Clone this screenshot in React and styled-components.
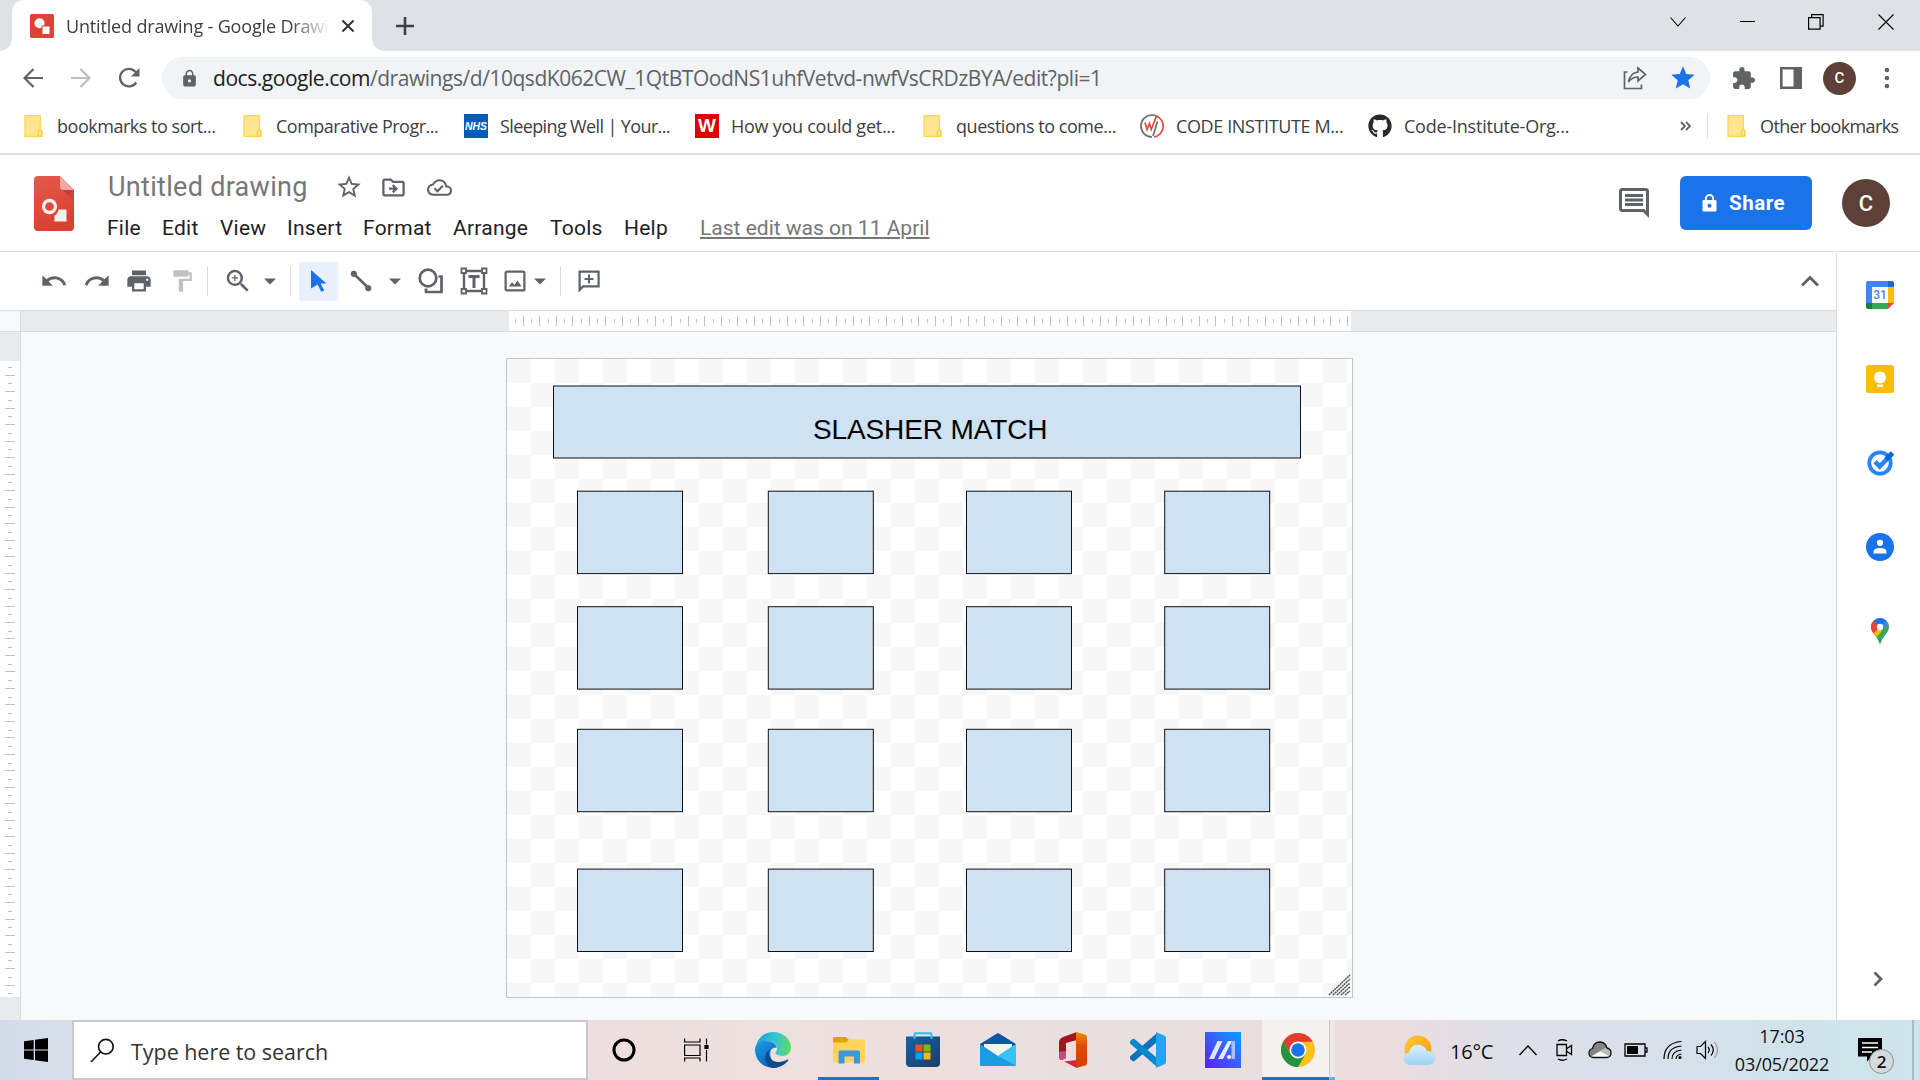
import React from "react";
import styled, { createGlobalStyle } from "styled-components";
import {
  MdUndo, MdRedo, MdPrint, MdFormatPaint, MdZoomIn, MdOutlineComment,
  MdStarOutline, MdStar, MdOutlineDriveFileMove, MdOutlineCloudDone, MdLock, MdExtension,
} from "react-icons/md";
import { FaGithub } from "react-icons/fa";

const Global = createGlobalStyle`
  * { box-sizing: border-box; }
  html, body { margin: 0; padding: 0; overflow: hidden; }
  svg { display: block; flex: none; }
`;

const ui = `"Open Sans", "Noto Sans", sans-serif`;

const Screen = styled.div`
  width: 1920px;
  height: 1080px;
  display: flex;
  flex-direction: column;
  background: #fff;
  overflow: hidden;
  font-family: ${ui};
`;

/* ---------- shared parts ---------- */
const Cell = styled.span`
  display: flex;
  flex: none;
  align-items: center;
  justify-content: center;
  width: ${(p) => p.$w}px;
  height: ${(p) => (p.$h ? p.$h + "px" : "auto")};
  margin-left: ${(p) => p.$ml || 0}px;
  color: ${(p) => p.$color || "#5f6368"};
  background: ${(p) => p.$bg || "transparent"};
  border-radius: ${(p) => p.$r || 0}px;
`;
const Spacer = styled.span`flex: 1;`;
const Avatar = styled.span`
  display: flex;
  flex: none;
  align-items: center;
  justify-content: center;
  width: ${(p) => p.$s}px;
  height: ${(p) => p.$s}px;
  margin: ${(p) => p.$m || "0"};
  border-radius: 50%;
  background: #5d4037;
  color: #fff;
  font: 500 ${(p) => p.$f}px Roboto, sans-serif;
`;

/* ---------- tab strip ---------- */
const TabStrip = styled.header`
  display: flex;
  flex: none;
  height: 51px;
  background: #dee1e6;
`;
const TabFoot = styled.span`
  width: 12px;
  height: 12px;
  align-self: flex-end;
  background: radial-gradient(circle at ${(p) => (p.$right ? "100%" : "0")} 0, #dee1e6 11.5px, #fff 12px);
`;
const Tab = styled.div`
  display: flex;
  align-items: center;
  width: 360px;
  padding: 0 0 0 18px;
  border-radius: 12px 12px 0 0;
  background: #fff;
`;
const TabTitle = styled.span`
  width: 262px;
  margin-left: 12px;
  overflow: hidden;
  white-space: nowrap;
  font-size: 18px;
  letter-spacing: -0.16px;
  color: #3c4043;
  mask-image: linear-gradient(90deg, #000 225px, transparent 264px);
`;
const WindowButtons = styled.div`
  display: flex;
  height: 43px;
`;

/* ---------- address bar ---------- */
const NavBar = styled.div`
  display: flex;
  flex: none;
  align-items: center;
  height: 54px;
  padding-left: 12px;
`;
const Omnibox = styled.div`
  display: flex;
  align-items: center;
  width: 1548px;
  height: 42px;
  margin-left: 12px;
  padding-left: 14px;
  border-radius: 21px;
  background: #f1f3f4;
`;
const Url = styled.span`
  width: 1360px;
  margin-left: 11px;
  white-space: nowrap;
  font-size: 21px;
  letter-spacing: -0.46px;
  color: #5f6368;
  b { font-weight: 400; color: #202124; }
`;

/* ---------- bookmarks ---------- */
const Bookmarks = styled.nav`
  display: flex;
  flex: none;
  align-items: center;
  height: 50px;
  padding: 0 0 7px 24px;
  border-bottom: 2px solid #dadcde;
`;
const Bookmark = styled.span`
  display: flex;
  flex: none;
  align-items: center;
  gap: 12px;
  width: ${(p) => p.$w}px;
  white-space: nowrap;
  font-size: 18px;
  letter-spacing: ${(p) => p.$ls}px;
  color: #3c4043;
`;
const Favicon = styled.span`
  display: flex;
  flex: none;
  align-items: center;
  justify-content: ${(p) => (p.$folder ? "flex-start" : "center")};
  width: ${(p) => (p.$folder ? 21 : 24)}px;
  height: 24px;
  background: ${(p) => p.$bg || "transparent"};
  color: #fff;
  font: ${(p) => p.$font || "inherit"};
  letter-spacing: 0;
`;
const Rule = styled.span`
  flex: none;
  width: 1px;
  height: ${(p) => p.$h}px;
  margin: ${(p) => p.$m};
  background: #dadce0;
`;

/* ---------- document header ---------- */
const DocHeader = styled.div`
  display: flex;
  flex: none;
  height: 97px;
  padding-left: 34px;
  border-bottom: 1px solid #dadce0;
`;
const LogoBox = styled.div`padding-top: 21px;`;
const DocInfo = styled.div`
  margin-left: 33px;
  padding-top: 14px;
`;
const TitleRow = styled.div`
  display: flex;
  align-items: center;
  height: 36px;
`;
const DocTitle = styled.span`
  width: 228px;
  padding-left: 1px;
  white-space: nowrap;
  font: 400 27px Roboto, sans-serif;
  letter-spacing: 0.3px;
  color: #777;
`;
const MenuRow = styled.div`
  display: flex;
  height: 44px;
  padding-top: 9px;
  font: 400 21px/28px Roboto, sans-serif;
  letter-spacing: 0.25px;
  color: #202124;
`;
const MenuItem = styled.span`
  width: ${(p) => p.$w}px;
  white-space: nowrap;
`;
const LastEdit = styled.a`
  color: #777;
  white-space: nowrap;
  letter-spacing: 0;
  text-decoration: underline;
  text-decoration-thickness: 2px;
  text-underline-offset: 2px;
`;
const HeaderActions = styled.div`
  display: flex;
  align-items: center;
  height: 96px;
`;
const ShareButton = styled.button`
  display: flex;
  align-items: center;
  gap: 12px;
  width: 132px;
  height: 54px;
  margin: 0 30px 0 28px;
  padding: 0 0 0 22px;
  border: 0;
  border-radius: 6px;
  background: #1a73e8;
  color: #fff;
  font: 700 20.5px Roboto, sans-serif;
  letter-spacing: 0.55px;
`;

/* ---------- editor ---------- */
const Body = styled.div`
  display: flex;
  flex: none;
  height: 768px;
`;
const Editor = styled.main`
  display: flex;
  flex-direction: column;
  width: 1836px;
`;
const Toolbar = styled.div`
  display: flex;
  flex: none;
  align-items: center;
  height: 59px;
  padding-left: 33px;
  border-bottom: 1px solid #dadce0;
`;
const RulerRow = styled.div`
  display: flex;
  height: 21px;
  border-bottom: 1px solid #d9dbde;
  background: #e8eaed;
`;
const Corner = styled.span`
  width: 21px;
  margin-right: 488px;
  background: #f8f9fb;
  border-right: 1px solid #d9dbde;
`;
const RulerX = styled.div`
  width: 842px;
  background: #fff;
`;
const Work = styled.div`
  display: flex;
  flex: 1;
  background: #f8f9fb;
`;
const RulerY = styled.div`
  width: 21px;
  padding-top: 29px;
  background: #e8eaed;
  border-right: 1px solid #d9dbde;
`;
const RulerYScale = styled.div`
  height: 636px;
  background: #fff;
`;
const Canvas = styled.div`
  width: 847px;
  height: 640px;
  margin: 26px 0 0 485px;
  border: 1px solid #c4c4c4;
  background: conic-gradient(#fff 25%, #f7f7f7 0 50%, #fff 0 75%, #f7f7f7 0) 0 0 / 48px 48px;
`;
const SidePanel = styled.aside`
  display: flex;
  flex-direction: column;
  align-items: center;
  gap: 42px;
  width: 84px;
  margin-top: 1px;
  padding: 21px 0 0 3px;
  border-left: 1px solid #dadce0;
`;
const SideApp = styled.span`
  display: flex;
  align-items: center;
  justify-content: center;
  width: 42px;
  height: 42px;
  margin-top: ${(p) => p.$mt || 0}px;
  margin-left: ${(p) => p.$ml || 0}px;
`;

/* ---------- taskbar ---------- */
const Taskbar = styled.footer`
  display: flex;
  flex: none;
  height: 60px;
  background: linear-gradient(90deg, #d2dbe8 0, #d6dfe9 72px, #ecdfdf 588px, #eee0de 760px, #e9dfe0 1150px, #eadddf 1400px, #dfdfe8 1500px, #d8e0ea 1640px, #d0e2ea 1780px, #cde4ea 1920px);
`;
const SearchBox = styled.div`
  display: flex;
  align-items: center;
  width: 516px;
  margin-left: 12px;
  padding-left: 16px;
  border: 2px solid #c9c9c9;
  background: #fff;
`;
const SearchText = styled.span`
  margin: 2px 0 0 16px;
  font-size: 21.5px;
  letter-spacing: -0.04px;
  color: #333;
`;
const TaskApp = styled.span`
  display: flex;
  flex: none;
  align-items: center;
  justify-content: center;
  width: ${(p) => p.$w || 75}px;
  padding-left: ${(p) => (p.$active ? 4 : 0)}px;
  border-bottom: 3px solid ${(p) => (p.$open ? "#0078d7" : "transparent")};
  border-top: 3px solid transparent;
  margin-left: ${(p) => p.$ml || 0}px;
  background: ${(p) => (p.$active ? "#f6f1f1" : "transparent")};
`;
const StackEdge = styled.span`
  width: 6px;
  border-left: 1px solid #d2c9cb;
  border-bottom: 3px solid #60ade6;
  background: #efe7e8;
`;
const Temp = styled.span`
  width: 60px;
  margin: 2px 0 0 14px;
  align-self: center;
  white-space: nowrap;
  font-size: 20px;
  letter-spacing: -0.2px;
  color: #111;
`;
const Clock = styled.div`
  display: flex;
  flex-direction: column;
  align-items: center;
  width: 110px;
  margin-left: 3px;
  padding-top: 2px;
  font-size: 18px;
  line-height: 28px;
  letter-spacing: -0.12px;
  color: #111;
`;
const Notice = styled.span`
  display: grid;
  align-self: center;
  width: 40px;
  height: 44px;
  margin-left: 21px;
  padding-top: 10px;
`;
const Glyph = styled.span`grid-area: 1 / 1;`;
const Badge = styled.span`
  grid-area: 1 / 1;
  align-self: end;
  display: flex;
  align-items: center;
  justify-content: center;
  width: 25px;
  height: 25px;
  margin: 0 0 -2px 11px;
  border: 1px solid #8c9396;
  border-radius: 50%;
  background: #d5dadc;
  font-size: 17px;
  font-weight: 600;
  color: #111;
`;
const ShowDesktop = styled.span`
  width: 8px;
  border-left: 2px solid #a9b9be;
`;

/* ---------- icons ---------- */
const Stroke = ({ w = 24, h = 24, d, c = "#5f6368", sw = 2, ...rest }) => (
  <svg width={w} height={h} viewBox={`0 0 ${w} ${h}`} fill="none" stroke={c} strokeWidth={sw} {...rest}>
    <path d={d} />
  </svg>
);
const Caret = () => (
  <svg width="12" height="7" viewBox="0 0 12 7"><path d="M0 .5h12L6 6.5z" fill="#5f6368" /></svg>
);
const FolderIcon = () => (
  <svg width="19" height="22" viewBox="0 0 19 22">
    <path d="M1 .7h15.300v13.500l1.500 1.300v5.800H1z" fill="#ffe58f" stroke="#fbd751" strokeWidth="1.300" />
    <path d="M14.300 21v-4.500q0-1.600 1.700-1.600t1.800 1.600V21z" fill="#ffe58f" stroke="#f5cf42" strokeWidth="1.200" />
  </svg>
);
const DrawingsFavicon = () => (
  <svg width="24" height="24" viewBox="0 0 24 24">
    <rect width="24" height="24" rx="1.500" fill="#db4437" />
    <circle cx="9.500" cy="9.300" r="5" fill="#fff" />
    <path d="M11.500 11.500h8.500v8.500h-8.500z" fill="#db4437" />
    <path d="M12.500 12.500h7v7.500h-7z" fill="#fff" />
  </svg>
);
const DrawingsLogo = () => (
  <svg width="40" height="55" viewBox="0 0 40 55">
    <defs>
      <linearGradient id="logoBody" x1="0" y1="0" x2="0.300" y2="1">
        <stop offset="0" stopColor="#e35a4e" /><stop offset="1" stopColor="#d9402f" />
      </linearGradient>
      <linearGradient id="logoShade" x1="0" y1="0" x2="1" y2="1">
        <stop offset="0" stopColor="#b83a35" /><stop offset="1" stopColor="#d8443a" />
      </linearGradient>
    </defs>
    <path d="M4 0h22l14 14v37q0 4-4 4H4q-4 0-4-4V4q0-4 4-4z" fill="url(#logoBody)" />
    <path d="M27.500 13L40 25.500V14z" fill="url(#logoShade)" />
    <path d="M26 0l14 14H29.500Q26 14 26 10.500z" fill="#efa9a2" />
    <circle cx="15.500" cy="30.500" r="6" fill="none" stroke="#f1f1f1" strokeWidth="3.300" />
    <path d="M24.500 33.500H32.500V45.500H20.500V39.500Q24 37.500 24.500 33.500z" fill="#f1f1f1" />
  </svg>
);
const CodeInstituteIcon = () => (
  <svg width="24" height="24" viewBox="0 0 24 24" fill="none" strokeWidth="1.700">
    <path d="M12 1A11 11 0 0 0 12 23" stroke="#6b6f73" />
    <path d="M12 1q2.500 0 4.500 1" stroke="#6b6f73" />
    <path d="M16.500 2A11 11 0 0 1 14 23" stroke="#e2483d" />
    <path d="M5 8.500l2 7 2.500-6 1.800 6L16.500 2" stroke="#e2483d" />
    <path d="M17.500 7.500L13 22" stroke="#6b6f73" />
  </svg>
);
const SelectIcon = () => (
  <svg width="16" height="22" viewBox="0 0 16 22"><path d="M0 0l15.500 13.500H9.600l3.600 7-3 1.300-3.500-7.200L0 18.500z" fill="#1a73e8" /></svg>
);
const LineIcon = () => (
  <svg width="22" height="22" viewBox="0 0 22 22" stroke="#5f6368" fill="#5f6368">
    <path d="M4 4l14.500 14" strokeWidth="2.600" /><circle cx="3.800" cy="3.800" r="2.700" /><circle cx="18.300" cy="18.200" r="2.700" />
  </svg>
);
const ShapeIcon = () => (
  <svg width="26" height="26" viewBox="0 0 26 26" stroke="#5f6368" fill="none" strokeWidth="2.700">
    <circle cx="10" cy="10" r="8.300" /><path d="M20.500 8.500h3V24H8v-3.500" />
  </svg>
);
const TextBoxIcon = () => (
  <svg width="28" height="28" viewBox="0 0 28 28" stroke="#5f6368" fill="none">
    <path d="M4 6v16M24 6v16M6 4h16M6 24h16" strokeWidth="2.400" />
    <path d="M8.500 9.500h11M14 9.500v11.500" strokeWidth="3" />
    <g strokeWidth="1.800" fill="#fff">
      <path d="M1.500 1.500h4.500v4.500H1.500zM22 1.500h4.500v4.500H22zM1.500 22h4.500v4.500H1.500zM22 22h4.500v4.500H22z" />
    </g>
  </svg>
);
const ImageIcon = () => (
  <svg width="22" height="22" viewBox="0 0 22 22">
    <rect x="1.600" y="1.600" width="18.800" height="18.800" rx="1.500" fill="none" stroke="#5f6368" strokeWidth="2.200" />
    <path d="M5 16.500l3-4.500 2.300 3 3.200-4.500 4 6z" fill="#5f6368" />
  </svg>
);
const AddCommentIcon = () => (
  <svg width="22" height="22" viewBox="0 0 22 22" fill="none" stroke="#5f6368" strokeWidth="2.200">
    <path d="M1.600 20V1.600h19v14.800H5L1.600 20z" /><path d="M11 4.500v9M6.500 9h9" strokeWidth="2" />
  </svg>
);
const PanelIcon = () => (
  <svg width="22" height="22" viewBox="0 0 22 22">
    <path d="M1.300 1.300h19.400v19.400H1.300z" fill="#fff" stroke="#5f6368" strokeWidth="2.600" /><path d="M13.500 1h7.500v20h-7.500z" fill="#5f6368" />
  </svg>
);
const CalendarIcon = () => (
  <svg width="28" height="28" viewBox="0 0 28 28">
    <path d="M0 2q0-2 2-2h20v6H6v16H0z" fill="#4285f4" /><path d="M22 0h4q2 0 2 2v4h-6z" fill="#1967d2" />
    <path d="M22 6h6v16h-6z" fill="#fbbc04" /><path d="M6 22h16v6H6z" fill="#34a853" />
    <path d="M0 22h6v6H2q-2 0-2-2z" fill="#188038" /><path d="M22 22h6l-6 6z" fill="#ea4335" /><path d="M6 6h16v16H6z" fill="#fff" />
    <text x="14" y="18.300" textAnchor="middle" fontFamily="Roboto, sans-serif" fontSize="12" fontWeight="500" fill="#4285f4">31</text>
  </svg>
);
const KeepIcon = () => (
  <svg width="28" height="28" viewBox="0 0 28 28">
    <rect width="28" height="28" rx="2.500" fill="#fbbc04" />
    <circle cx="14" cy="12.500" r="6" fill="#fff" /><path d="M11 15h6v3h-6zM11 19.500h6v2.500h-6z" fill="#fff" />
  </svg>
);
const TasksIcon = () => (
  <svg width="28" height="28" viewBox="0 0 28 28" fill="none">
    <circle cx="14" cy="14" r="10.700" stroke="#2684fc" strokeWidth="3.800" />
    <path d="M9 12.700l4.700 4.700L22.500 8.500" stroke="#2684fc" strokeWidth="4.600" /><path d="M20 10.500L26.500 4" stroke="#0066da" strokeWidth="4.800" />
  </svg>
);
const ContactsIcon = () => (
  <svg width="28" height="28" viewBox="0 0 28 28">
    <circle cx="14" cy="14" r="14" fill="#1a73e8" /><circle cx="14" cy="9.800" r="3.100" fill="#fff" />
    <path d="M7.500 20.500v-1.500q0-4 6.500-4t6.500 4v1.500z" fill="#fff" />
  </svg>
);
const MapsIcon = () => (
  <svg width="18" height="26" viewBox="0 0 18 26">
    <defs><clipPath id="pin"><path d="M9 0a9 9 0 0 1 9 9c0 6-6 8-8 15.500q-1 2.500-2 0C6 17 0 15 0 9a9 9 0 0 1 9-9z" /></clipPath></defs>
    <g clipPath="url(#pin)">
      <path d="M0 0h18v26H0z" fill="#34a853" /><path d="M0 0h18L9 9z" fill="#1a73e8" /><path d="M9 9L18 0v5L4 20 0 16z" fill="#4285f4" />
      <path d="M0 15L6 8l5 5-7 8z" fill="#fbbc04" /><path d="M0 3l2.500 0L9 9l-6 6-3 0z" fill="#ea4335" />
    </g>
    <circle cx="9" cy="9" r="3.200" fill="#fff" />
  </svg>
);
const WindowsIcon = () => (
  <svg width="24" height="24" viewBox="0 0 24 24"><path d="M0 3.300L9.700 2v9.500H0zM11 1.800L24 0v11.500H11zM0 12.500h9.700V22L0 20.700zM11 12.500h13V24L11 22.200z" /></svg>
);
const EdgeIcon = () => (
  <svg width="36" height="36" viewBox="0 0 36 36">
    <defs>
      <linearGradient id="edgeTop" x1="0" y1="0.500" x2="1" y2="0.600"><stop offset="0" stopColor="#1fa2dc" /><stop offset="0.550" stopColor="#37c6d0" /><stop offset="1" stopColor="#5fdc5a" /></linearGradient>
      <linearGradient id="edgeSide" x1="0" y1="0" x2="0.600" y2="1"><stop offset="0" stopColor="#1b9de2" /><stop offset="1" stopColor="#0b62c4" /></linearGradient>
    </defs>
    <path d="M1 14C3 5 10 0 18 0c10 0 18 7 18 15.500 0 5-4 8.500-8.500 8.500-5 0-7-2-7-3.200 0-1 1.500-1.500 1.500-4C22 12 17 9 12 9 7 9 3 11 1 14z" fill="url(#edgeTop)" />
    <path d="M0 18C0 12 5 9 11 9c6 0 10.500 3 10.500 7-7-2-10 9 1 19.300A18 18 0 0 1 0 18z" fill="url(#edgeSide)" />
    <path d="M15.500 17.500C13 20 13 25 17 28c5 3.500 11 2 15.500-.5.800-.3 1 .3.600 1C29 34 23 36 18 36c-7-2-9-9-7-14 1-2.500 3-4 4.500-4.500z" fill="#114a8b" />
  </svg>
);
const ExplorerIcon = () => (
  <svg width="34" height="28" viewBox="0 0 34 28">
    <path d="M1 1.500Q1 1 2 1h12l3 3v6H1z" fill="#e0a10c" /><path d="M1 6.500h13l3-3h15q1 0 1 1v21q0 1-1 1H2q-1 0-1-1z" fill="#ffd35c" />
    <path d="M6.500 27.500V16q0-1.500 1.500-1.500h18.500q1.500 0 1.500 1.500v11.500h-6v-7h-9.500v7z" fill="#3b97de" />
  </svg>
);
const StoreIcon = () => (
  <svg width="36" height="36" viewBox="0 0 36 36">
    <defs><linearGradient id="store" x1="0" y1="0" x2="1" y2="1"><stop offset="0" stopColor="#0f65ad" /><stop offset="1" stopColor="#233a63" /></linearGradient></defs>
    <path d="M1 4.500h34V31q0 4-4 4H5q-4 0-4-4z" fill="url(#store)" /><path d="M9.500 7V2.500q0-1.200 1.200-1.200h14.600q1.200 0 1.200 1.200V7" fill="none" stroke="#27c0f2" strokeWidth="2" />
    <path d="M10.500 12.500h7v7h-7z" fill="#f25022" /><path d="M18.500 12.500h7v7h-7z" fill="#7fba00" /><path d="M10.500 20.500h7v7h-7z" fill="#00a4ef" /><path d="M18.500 20.500h7v7h-7z" fill="#ffb900" />
  </svg>
);
const MailIcon = () => (
  <svg width="36" height="34" viewBox="0 0 36 34">
    <path d="M0 11L17 .600q1-.600 2 0L36 11v6H0z" fill="#0a57a5" /><path d="M4 11h28v12H4z" fill="#f2f2f2" />
    <path d="M0 11l18 12L36 11v21q0 1-1 1H1q-1 0-1-1z" fill="#1b9de2" /><path d="M36 11v21.500L18 23z" fill="#37c3f1" />
  </svg>
);
const OfficeIcon = () => (
  <svg width="28" height="36" viewBox="0 0 28 36">
    <defs><linearGradient id="office" x1="0" y1="0" x2="0" y2="1"><stop offset="0" stopColor="#f08a00" /><stop offset="0.400" stopColor="#e2490b" /><stop offset="1" stopColor="#d53a00" /></linearGradient></defs>
    <path d="M18 0L4 5Q0 7 0 10v15q0 3 3 3l4-2V11l11-3z" fill="#a3161f" /><path d="M0 20v5q0 3 3 3l4-2v-7z" fill="#c54a83" />
    <path d="M5 29.500l13-1.500v8z" fill="#d9203d" /><path d="M17 0l9 2.500q2 .500 2 3v25q0 2.500-2 3L17 36z" fill="url(#office)" />
  </svg>
);
const CodeIcon = () => (
  <svg width="36" height="36" viewBox="0 0 36 36">
    <path d="M27 1L0 24.500q-1 1.200 0 2.200l2.500 2.200q1 .6 2 0L27 10z" fill="#0a72b9" /><path d="M27 35L0 11.500q-1-1.200 0-2.200l2.500-2.200q1-.6 2 0L27 26z" fill="#0d86d0" />
    <path d="M26 0l9 4q1 .6 1 2v24q0 1.400-1 2l-9 4z" fill="#27a4ef" />
  </svg>
);
const AsusIcon = () => (
  <svg width="36" height="36" viewBox="0 0 36 36">
    <defs><linearGradient id="asus" x1="0" y1="1" x2="1" y2="0"><stop offset="0" stopColor="#5a1fff" /><stop offset="0.500" stopColor="#3a5dfd" /><stop offset="1" stopColor="#05a2ff" /></linearGradient></defs>
    <path d="M0 0h36v36H0z" fill="url(#asus)" /><path d="M12.500 9h5L9 27H4z" fill="#dfe4ff" /><path d="M23 9h4L18 27h-5z" fill="#e9ecff" />
    <path d="M26.500 9h3.500v18h-3.500z" fill="#aac0ff" /><circle cx="24" cy="25" r="2" fill="#fff" />
  </svg>
);
const ChromeIcon = () => (
  <svg width="34" height="34" viewBox="0 0 34 34">
    <circle cx="17" cy="17" r="17" fill="#fbc116" /><path d="M2.280 8.500A17 17 0 0 1 31.720 8.500L17 9l-7.360 12.250z" fill="#e33b2e" />
    <path d="M2.280 8.500A17 17 0 0 0 17 34l7.360-12.750L17 25.500l-7.360-4.250z" fill="#229342" />
    <circle cx="17" cy="17" r="8.500" fill="#fff" /><circle cx="17" cy="17" r="6.800" fill="#1a73e8" />
  </svg>
);
const WeatherIcon = () => (
  <svg width="33" height="36" viewBox="0 0 33 36">
    <defs>
      <linearGradient id="sun" x1="0" y1="0" x2="1" y2="1"><stop offset="0" stopColor="#ffc83d" /><stop offset="1" stopColor="#ff9a0a" /></linearGradient>
      <linearGradient id="cloud" x1="0" y1="0" x2="0" y2="1"><stop offset="0" stopColor="#dcf2ff" /><stop offset="1" stopColor="#9fd2f5" /></linearGradient>
    </defs>
    <circle cx="15" cy="17" r="13.500" fill="url(#sun)" />
    <path d="M6.500 33a6.300 6.300 0 0 1-.5-12.500Q7.500 13 15 12.800 21.500 13 24 19q8-.5 8.500 6.500-.5 7-7 7.500z" fill="url(#cloud)" />
  </svg>
);
const TrayCloud = () => (
  <svg width="24" height="18" viewBox="0 0 24 18">
    <path d="M5 16.500q-4-.5-4-4.500 0-3.500 3.500-4.500Q6 1 12 1q5.500.3 7 6 4 1 4 5 0 4-4 4.500z" fill="#fafafa" />
    <path d="M4.500 7.500Q6 1.500 12 1.500q5 .3 6.500 5L3 15.500q-1.500-1-1.500-3.500 0-3.500 3-4.500z" fill="#858585" />
    <path d="M12.500 10.500l6-4q4 1 4 5.500 0 2-1.500 3.200z" fill="#bbb" />
    <path d="M5 16.500q-4-.5-4-4.500 0-3.500 3.500-4.500Q6 1 12 1q5.500.3 7 6 4 1 4 5 0 4-4 4.500z" fill="none" stroke="#111" strokeWidth="1.300" />
  </svg>
);

/* ---------- data ---------- */
const bookmarks = [
  { w: 219, kind: "folder", label: "bookmarks to sort...", ls: -0.48 },
  { w: 221, kind: "folder", label: "Comparative Progr...", ls: -0.5 },
  { w: 231, kind: "nhs", label: "Sleeping Well | Your...", ls: -0.62 },
  { w: 228, kind: "w", label: "How you could get...", ls: -0.26 },
  { w: 217, kind: "folder", label: "questions to come...", ls: -0.46 },
  { w: 228, kind: "ci", label: "CODE INSTITUTE M...", ls: -0.38 },
  { w: 309, kind: "github", label: "Code-Institute-Org...", ls: -0.22 },
];
const menus = [["File", 55], ["Edit", 58], ["View", 67], ["Insert", 76], ["Format", 90], ["Arrange", 97], ["Tools", 74], ["Help", 76]];
const columns = [577.5, 768.3, 966.5, 1164.7];
const rows = [491.2, 606.7, 729.3, 869.1];

const BookmarkIcon = ({ kind }) => {
  if (kind === "folder") return <Favicon $folder><FolderIcon /></Favicon>;
  if (kind === "nhs") return <Favicon $bg="#005eb8" $font={'italic 700 10.5px "Liberation Sans", sans-serif'}>NHS</Favicon>;
  if (kind === "w") return <Favicon $bg="#e00000" $font={'700 19px "Liberation Sans", sans-serif'}>W</Favicon>;
  if (kind === "ci") return <Favicon><CodeInstituteIcon /></Favicon>;
  return <Favicon><FaGithub size={24} color="#24292e" /></Favicon>;
};

const ticks = (n, start, from, to) =>
  Array.from({ length: n }, (_, i) => Math.floor(start + 16.48 * i)).filter((v) => v >= from && v < to);

const HorizontalScale = () => (
  <svg width="842" height="20" viewBox="509 311 842 20" fill="#c0c1c9">
    {ticks(52, 523.45, 509, 1351).map((x) => <rect key={x} x={x} y="316" width="1" height="10" />)}
    {ticks(52, 515.5, 509, 1351).map((x) => <rect key={x} x={x} y="319" width="1" height="4" />)}
  </svg>
);
const VerticalScale = () => (
  <svg width="20" height="636" viewBox="0 361 20 636" fill="#bdbec6">
    {ticks(52, 375.3, 361, 996).map((y) => <rect key={y} x="5" y={y} width="10" height="1" />)}
    {ticks(52, 367.5, 361, 996).map((y) => <rect key={y} x="8" y={y} width="4" height="1" />)}
  </svg>
);
const Drawing = () => (
  <svg width="845" height="638" viewBox="507 359 845 638">
    <g fill="#cfe2f3" stroke="#111">
      <rect x="553.5" y="386" width="747" height="72" />
      {rows.map((y) => columns.map((x) => <rect key={`${x}-${y}`} x={x} y={y} width="105" height="82.4" />))}
    </g>
    <text x="813" y="439" fontFamily='"Liberation Sans", Arial, sans-serif' fontSize="28" textLength="234.500">SLASHER MATCH</text>
    <path d="M1329 995l21-20M1333 995l17-16M1337 995l13-12M1341 995l9-8M1345 995l5-4" stroke="#555" strokeWidth="1.500" strokeDasharray="2 .5" />
  </svg>
);

export default function App() {
  return (
    <Screen>
      <Global />
      <TabStrip>
        <TabFoot />
        <Tab>
          <DrawingsFavicon />
          <TabTitle>Untitled drawing - Google Drawings</TabTitle>
          <Cell $w={24} $ml={8}><Stroke w={14} h={14} c="#303235" sw={2} d="M1.500 1.500l11 11M12.500 1.500l-11 11" /></Cell>
        </Tab>
        <TabFoot $right />
        <Cell $w={42}><Stroke w={18} h={18} c="#3c4043" sw={2.6} d="M9 0v18M0 9h18" /></Cell>
        <Spacer />
        <WindowButtons>
          <Cell $w={60}><Stroke w={16} h={10} c="#000" sw={1.1} d="M.500 .500l7.500 8.500 7.500-8.500" /></Cell>
          <Cell $w={78}><Stroke w={15} h={2} c="#000" sw={1} d="M0 .500h15" /></Cell>
          <Cell $w={60}><Stroke w={16} h={16} c="#000" sw={1.200} d="M.600 3.600h11.500v11.500H.600zM3.600 3.600V.600h11.500v11.500h-3" /></Cell>
          <Cell $w={69} $ml={5}><Stroke w={16} h={16} c="#000" sw={1.1} d="M.500 .500l15 15M15.500 .500l-15 15" /></Cell>
        </WindowButtons>
      </TabStrip>

      <NavBar>
        <Cell $w={42}><Stroke w={20} h={20} sw={2.2} d="M20 10H1.500M10.500 1L1.500 10l9 9" /></Cell>
        <Cell $w={54}><Stroke w={20} h={20} c="#bcbec1" sw={2.2} d="M0 10h18.500M9.500 1l9 9-9 9" /></Cell>
        <Cell $w={42}>
          <svg width="22" height="22" viewBox="0 0 22 22"><path d="M18.200 15.500A8.800 8.800 0 1 1 17.500 4.800L20 7.500" fill="none" stroke="#5f6368" strokeWidth="2.300" /><path d="M21.500 1v8.500H13z" fill="#5f6368" /></svg>
        </Cell>
        <Omnibox>
          <Cell $w={26}><MdLock size={19} /></Cell>
          <Url><b>docs.google.com</b>/drawings/d/10qsdK062CW_1QtBTOodNS1uhfVetvd-nwfVsCRDzBYA/edit?pli=1</Url>
          <Cell $w={50} $ml={37}>
            <Stroke w={24} h={24} sw={1.7} d="M4.500 6H1.500v16.500h17v-4M15 2l7.500 6.500L15 15v-4q-6 0-9.500 5Q7 7 15 6z" />
          </Cell>
          <Cell $w={54} $ml={-4} $color="#1a73e8"><MdStar size={28} /></Cell>
        </Omnibox>
        <Cell $w={42} $ml={12}><MdExtension size={25} /></Cell>
        <Cell $w={54}><PanelIcon /></Cell>
        <Avatar $s={33} $f={15} $m="0 0 0 5px">C</Avatar>
        <Cell $w={42} $ml={10}>
          <svg width="6" height="22" viewBox="0 0 6 22" fill="#5f6368"><circle cx="3" cy="3" r="2.300" /><circle cx="3" cy="11" r="2.300" /><circle cx="3" cy="19" r="2.300" /></svg>
        </Cell>
      </NavBar>

      <Bookmarks>
        {bookmarks.map((b) => (
          <Bookmark key={b.label} $w={b.w} $ls={b.ls}><BookmarkIcon kind={b.kind} />{b.label}</Bookmark>
        ))}
        <Cell $w={16}><Stroke w={11} h={10} sw={1.800} d="M1 1l4 4-4 4M6 1l4 4-4 4" /></Cell>
        <Rule $h={24} $m="0 19px 0 14px" />
        <Bookmark $w={190} $ls={-0.62}><BookmarkIcon kind="folder" />Other bookmarks</Bookmark>
      </Bookmarks>

      <DocHeader>
        <LogoBox><DrawingsLogo /></LogoBox>
        <DocInfo>
          <TitleRow>
            <DocTitle>Untitled drawing</DocTitle>
            <Cell $w={28}><MdStarOutline size={28} /></Cell>
            <Cell $w={28} $ml={16}><MdOutlineDriveFileMove size={27} /></Cell>
            <Cell $w={28} $ml={18}><MdOutlineCloudDone size={25} /></Cell>
          </TitleRow>
          <MenuRow>
            {menus.map(([label, w]) => <MenuItem key={label} $w={w}>{label}</MenuItem>)}
            <LastEdit>Last edit was on 11 April</LastEdit>
          </MenuRow>
        </DocInfo>
        <Spacer />
        <HeaderActions>
          <Cell $w={36}><MdOutlineComment size={36} /></Cell>
          <ShareButton>
            <svg width="15" height="18" viewBox="0 0 15 18"><path d="M3.800 7V4.700a3.700 3.700 0 0 1 7.400 0V7" fill="none" stroke="#fff" strokeWidth="1.900" /><rect x=".5" y="6" width="14" height="11.500" rx="1.300" fill="#fff" /><circle cx="7.500" cy="11.700" r="2" fill="#1a73e8" /></svg>
            Share
          </ShareButton>
          <Avatar $s={48} $f={22} $m="0 30px 0 0">C</Avatar>
        </HeaderActions>
      </DocHeader>

      <Body>
        <Editor>
          <Toolbar>
            <Cell $w={42}><MdUndo size={28} /></Cell>
            <Cell $w={43}><MdRedo size={28} /></Cell>
            <Cell $w={42}><MdPrint size={28} /></Cell>
            <Cell $w={43} $color="#bfc1c3"><MdFormatPaint size={26} /></Cell>
            <Rule $h={30} $m="0 3px 0 4px" />
            <Cell $w={54}><MdZoomIn size={30} /></Cell>
            <Cell $w={10}><Caret /></Cell>
            <Rule $h={30} $m="0 8px 0 15px" />
            <Cell $w={39} $h={39} $bg="#e8f0fe" $r={3}><SelectIcon /></Cell>
            <Cell $w={46}><LineIcon /></Cell>
            <Cell $w={21}><Caret /></Cell>
            <Cell $w={51}><ShapeIcon /></Cell>
            <Cell $w={36}><TextBoxIcon /></Cell>
            <Cell $w={26} $ml={10}><ImageIcon /></Cell>
            <Cell $w={24}><Caret /></Cell>
            <Rule $h={30} $m="0 8px 0 8px" />
            <Cell $w={39}><AddCommentIcon /></Cell>
            <Spacer />
            <Cell $w={53}><Stroke w={18} h={12} sw={3} d="M1 10.500l8-8 8 8" /></Cell>
          </Toolbar>
          <RulerRow>
            <Corner />
            <RulerX><HorizontalScale /></RulerX>
          </RulerRow>
          <Work>
            <RulerY><RulerYScale><VerticalScale /></RulerYScale></RulerY>
            <Canvas><Drawing /></Canvas>
          </Work>
        </Editor>
        <SidePanel>
          <SideApp><CalendarIcon /></SideApp>
          <SideApp><KeepIcon /></SideApp>
          <SideApp><TasksIcon /></SideApp>
          <SideApp><ContactsIcon /></SideApp>
          <SideApp><MapsIcon /></SideApp>
          <SideApp $mt={264} $ml={-4}><Stroke w={10} h={16} sw={2.8} d="M1.500 1.500L8 8l-6.500 6.500" /></SideApp>
        </SidePanel>
      </Body>

      <Taskbar>
        <Cell $w={48} $ml={12}><WindowsIcon /></Cell>
        <SearchBox>
          <svg width="25" height="25" viewBox="0 0 26 26" fill="none" stroke="#111" strokeWidth="1.700"><circle cx="16.500" cy="9" r="7.600" /><path d="M11 14.500L1 25" /></svg>
          <SearchText>Type here to search</SearchText>
        </SearchBox>
        <Cell $w={72}><svg width="24" height="24" viewBox="0 0 24 24"><circle cx="12" cy="12" r="10" fill="none" stroke="#000" strokeWidth="3" /></svg></Cell>
        <Cell $w={72}>
          <svg width="25" height="24" viewBox="0 0 25 24" fill="none" stroke="#000" strokeWidth="1.200">
            <path d="M.600 .500v3.500h15.400V.500M.600 7h15.400v10.500H.600zM.600 23.500V20h15.400v3.500M22.500 .500v6M22.500 12v11.500" /><path d="M21 7.500h3v3h-3z" fill="#000" />
          </svg>
        </Cell>
        <TaskApp $w={82}><EdgeIcon /></TaskApp>
        <TaskApp $w={61} $open $ml={4}><ExplorerIcon /></TaskApp>
        <TaskApp $ml={6}><StoreIcon /></TaskApp>
        <TaskApp><MailIcon /></TaskApp>
        <TaskApp><OfficeIcon /></TaskApp>
        <TaskApp><CodeIcon /></TaskApp>
        <TaskApp><AsusIcon /></TaskApp>
        <TaskApp $w={67} $open $active $ml={2}><ChromeIcon /></TaskApp>
        <StackEdge />
        <Cell $w={33} $ml={68}><WeatherIcon /></Cell>
        <Temp>16°C</Temp>
        <Cell $w={36}><Stroke w={18} h={11} c="#000" sw={1.3} d="M.500 10l8.500-9 8.500 9" /></Cell>
        <Cell $w={36}><Stroke w={18} h={24} c="#000" sw={1.3} d="M2 6.500h9.500v11H2zM12 10.500l4.500-3v9l-4.500-3M3 3q4-2.500 9 0M3 21q4 2.500 9 0" /></Cell>
        <Cell $w={36}><TrayCloud /></Cell>
        <Cell $w={36}><svg width="24" height="14" viewBox="0 0 24 14"><path d="M1 1h20v12H1zM21 5h2v4h-2z" fill="none" stroke="#000" strokeWidth="1.300" /><path d="M3 3h11v8H3z" /></svg></Cell>
        <Cell $w={38}>
          <svg width="20" height="20" viewBox="0 0 20 20" fill="none" stroke="#000" strokeWidth="1.200"><path d="M1 19Q1 3 18.500 1.500M5 19Q5 7 18.500 6M9 19q0-8 9.500-9M13 19q0-4 5.500-5" /><circle cx="17" cy="17.500" r="1.600" fill="#000" stroke="none" /></svg>
        </Cell>
        <Cell $w={32}>
          <svg width="24" height="20" viewBox="0 0 24 20" fill="none" stroke="#000" strokeWidth="1.200"><path d="M1 6.500h3.500L9.500 1.500v17L4.500 13.500H1zM12 7q2.500 3 0 6M15 4.500q4.500 5.500 0 11" /><path d="M18.500 2q6 8 0 16" stroke="#999" /></svg>
        </Cell>
        <Clock><span>17:03</span><span>03/05/2022</span></Clock>
        <Notice>
          <Glyph><svg width="24" height="24" viewBox="0 0 24 24"><path d="M0 0h24v18.500H14L9 23.500v-5H0z" /><path d="M4 5h16M4 9.500h16M4 14h10" stroke="#fff" strokeWidth="1.300" /></svg></Glyph>
          <Badge>2</Badge>
        </Notice>
        <Spacer />
        <ShowDesktop />
      </Taskbar>
    </Screen>
  );
}
